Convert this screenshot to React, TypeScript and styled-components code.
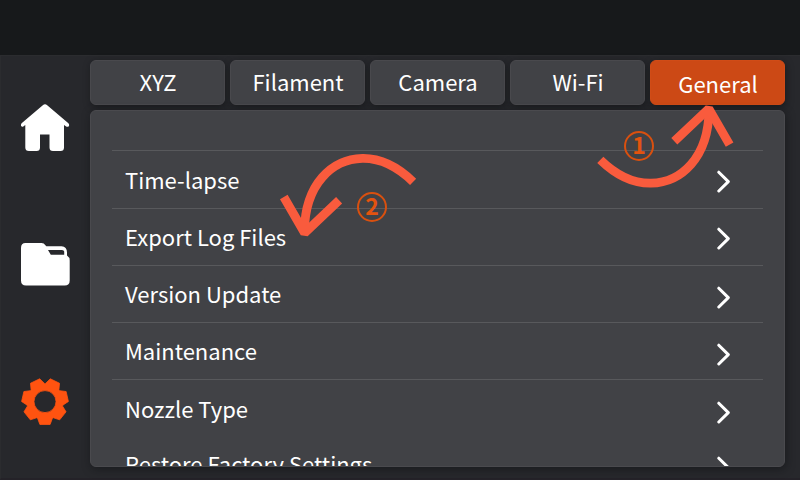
import React from 'react';
import styled, { createGlobalStyle } from 'styled-components';

const GlobalStyle = createGlobalStyle`
  * { box-sizing: border-box; }
  body { margin: 0; background: #18191b; }
`;

const Screen = styled.div`
  position: relative;
  width: 800px;
  height: 480px;
  overflow: hidden;
  display: flex;
  flex-direction: column;
  background: #27282c;
  color: #fff;
  font-family: 'Noto Sans CJK SC', 'Noto Sans', sans-serif;
  font-size: 22px;
`;

const TopBar = styled.div`
  flex: none;
  height: 55px;
  background: #17191b;
`;

const Body = styled.div`
  flex: 1;
  display: flex;
  border: 1px solid #2b2c2f;
  border-right: none;
  border-bottom: 2px solid #242228;
`;

const Sidebar = styled.nav`
  width: 89px;
  padding: 48px 0 0 19px;
  display: flex;
  flex-direction: column;
  align-items: flex-start;
  gap: 88px;
`;

const SideIcon = styled.svg<{ $active?: boolean }>`
  display: block;
  flex: none;
  width: 50px;
  height: 49px;
  color: ${(p) => (p.$active ? '#ff5310' : '#fff')};
  fill: currentColor;
`;

const Main = styled.main`
  width: 695px;
  padding-top: 4px;
  display: flex;
  flex-direction: column;
  gap: 5px;
`;

const Tabs = styled.div`
  display: grid;
  grid-template-columns: repeat(5, 135px);
  gap: 5px;
`;

const Tab = styled.div<{ $active?: boolean }>`
  height: 45px;
  padding: ${(p) => (p.$active ? '0 0 0 1px' : '0 0 4px 1px')};
  display: flex;
  align-items: center;
  justify-content: center;
  border: 1px solid ${(p) => (p.$active ? '#d04c17' : '#49494d')};
  border-radius: 6px;
  background: ${(p) => (p.$active ? '#cc4915' : '#414246')};
  box-shadow: 1px 2px 7px rgba(12, 13, 16, 0.5);
`;

const Panel = styled.div`
  height: 357px;
  padding: 39px 21px 0;
  overflow: hidden;
  border: 1px solid #4a4a4e;
  border-radius: 6px;
  background: #414246;
  box-shadow: 1px 2px 8px rgba(12, 13, 16, 0.5);
`;

const Row = styled.div<{ $height: number; $divider: boolean; $textTop: number; $iconTop: number }>`
  height: ${(p) => p.$height}px;
  padding: 0 32px 0 13px;
  display: flex;
  justify-content: space-between;
  align-items: flex-start;
  border-top: 1px solid ${(p) => (p.$divider ? '#58595c' : 'transparent')};

  span {
    line-height: 34px;
    margin-top: ${(p) => p.$textTop}px;
  }
  svg {
    margin-top: ${(p) => p.$iconTop}px;
  }
`;

const Chevron = styled.svg`
  display: block;
  width: 14px;
  height: 24px;
  fill: none;
  stroke: #fff;
  stroke-width: 3;
  stroke-linecap: round;
  stroke-linejoin: round;
`;

const Arrows = styled.svg`
  position: absolute;
  inset: 0;
  fill: none;
  stroke: #f95b3d;
  stroke-width: 8.8;
`;

const Step = styled.div<{ $x: number; $y: number }>`
  position: absolute;
  left: ${(p) => p.$x}px;
  top: ${(p) => p.$y}px;
  width: 30px;
  height: 30px;
  border: 2px solid #d9500f;
  border-radius: 50%;
  color: #e3530f;
  font-size: 23px;
  font-weight: 700;
  line-height: 23px;
  text-align: center;
`;

const polar = (r: number, a: number) =>
  `${(25 + r * Math.sin(a)).toFixed(2)} ${(23.6 + r * Math.cos(a)).toFixed(2)}`;

const gearPath =
  'M' +
  Array.from({ length: 7 }, (_, i) => {
    const a = (i * 2 * Math.PI) / 7;
    return [polar(18.2, a - 0.42), polar(23.4, a - 0.22), polar(23.4, a + 0.22), polar(18.2, a + 0.42)].join('L');
  }).join('L') +
  'Z';

const tabs = ['XYZ', 'Filament', 'Camera', 'Wi-Fi', 'General'];

const rows = [
  { label: 'Time-lapse', height: 58, divider: true, textTop: 11, iconTop: 19 },
  { label: 'Export Log Files', height: 57, divider: true, textTop: 10, iconTop: 18 },
  { label: 'Version Update', height: 57, divider: true, textTop: 10, iconTop: 20 },
  { label: 'Maintenance', height: 57, divider: true, textTop: 10, iconTop: 20 },
  { label: 'Nozzle Type', height: 57, divider: true, textTop: 11, iconTop: 21 },
  { label: 'Restore Factory Settings', height: 57, divider: false, textTop: 9, iconTop: 19 },
];

const Arrow = ({ turned }: { turned?: boolean }) => (
  <g transform={turned ? 'rotate(180 506.7 170.8)' : undefined}>
    <path d="M600.3 159.8C617 176 634 183.5 651 183.2C681 182.5 708.5 158 709 110" />
    <path d="M674.3 141.3L708.8 108.6L729.6 144.6" strokeLinejoin="bevel" />
  </g>
);

export default function App() {
  return (
    <>
      <GlobalStyle />
      <Screen>
        <TopBar />
        <Body>
          <Sidebar>
            <SideIcon viewBox="0 0 50 49">
              <path d="M22.8 1.2Q25 -.8 27.2 1.2L48.4 19.2Q49.8 21 48.6 22.4Q47.4 23.4 45.8 22.2L44 21V43.5Q44 47 40.5 47H33Q29.5 47 29.5 43.5V30.5H20V43.5Q20 47 16.5 47H9Q5.3 47 5.3 43.5V21L3.6 22.2Q2.4 23.2 1.3 22.3Q.4 20.8 1.6 19.2Z" />
            </SideIcon>
            <SideIcon viewBox="0 0 50 49">
              <path
                fillRule="evenodd"
                d="M5.5 2H21.5Q24 2 25.4 4.3L26.3 5.2H41.5Q47 5.8 47 11.5V14.6Q49.7 16.3 49.7 19.5V39.5Q49.7 44.5 44.7 44.5H6Q1 44.5 1 39.5V7Q1 2 5.5 2ZM28 9L30.8 13.7H44.2V10.5Q44 9 42 9Z"
              />
            </SideIcon>
            <SideIcon viewBox="0 0 50 49" $active>
              <path
                fillRule="evenodd"
                stroke="currentColor"
                strokeWidth=".8"
                strokeLinejoin="round"
                d={`${gearPath}M36 23.6A11 11 0 1 0 14 23.6A11 11 0 1 0 36 23.6Z`}
              />
            </SideIcon>
          </Sidebar>
          <Main>
            <Tabs>
              {tabs.map((t) => (
                <Tab key={t} $active={t === 'General'}>
                  {t}
                </Tab>
              ))}
            </Tabs>
            <Panel>
              {rows.map((r) => (
                <Row key={r.label} $height={r.height} $divider={r.divider} $textTop={r.textTop} $iconTop={r.iconTop}>
                  <span>{r.label}</span>
                  <Chevron viewBox="0 0 14 24">
                    <path d="M1.8 2.2L11.3 11.6L1.8 21" />
                  </Chevron>
                </Row>
              ))}
            </Panel>
          </Main>
        </Body>
        <Arrows width="800" height="480" viewBox="0 0 800 480">
          <Arrow />
          <Arrow turned />
        </Arrows>
        <Step $x={624} $y={131}>1</Step>
        <Step $x={357} $y={192}>2</Step>
      </Screen>
    </>
  );
}
